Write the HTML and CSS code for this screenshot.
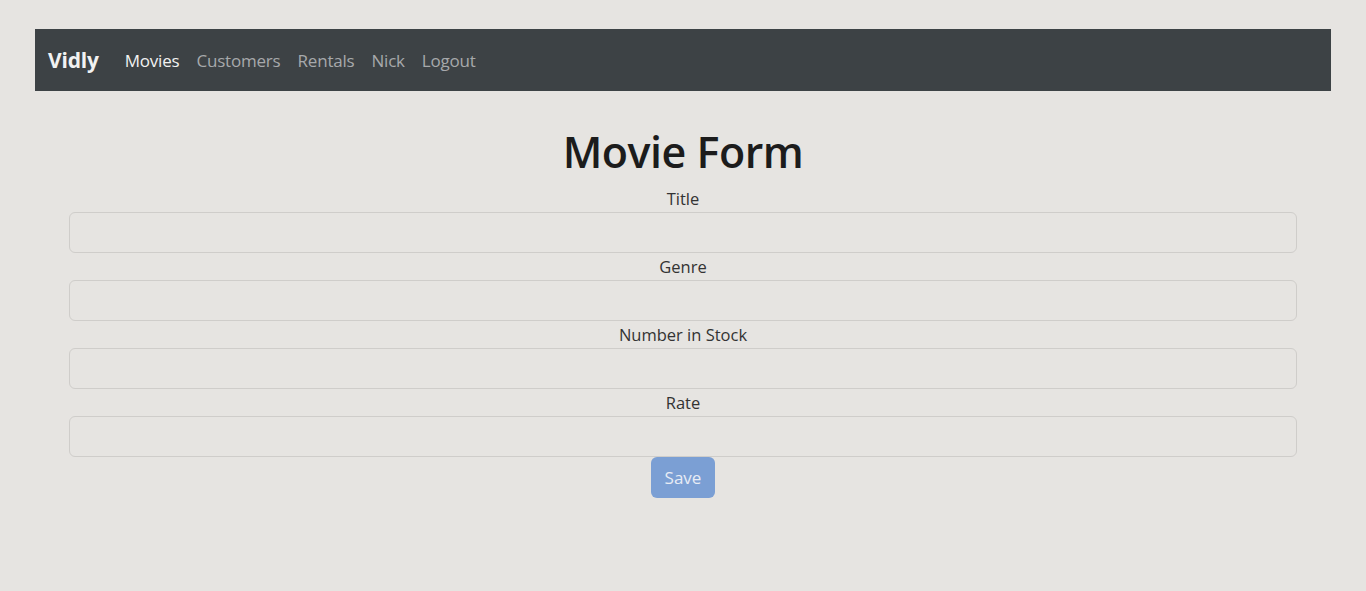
FILE: index.html
```html
<!DOCTYPE html>
<html lang="en">
<head>
<meta charset="utf-8">
<title>Vidly</title>
<link rel="stylesheet" href="styles.css">
</head>
<body>
<div class="page">
  <nav class="navbar">
    <a class="brand" href="#">Vidly</a>
    <ul class="nav-links">
      <li><a class="nav-link active" href="#">Movies</a></li>
      <li><a class="nav-link" href="#">Customers</a></li>
      <li><a class="nav-link" href="#">Rentals</a></li>
      <li><a class="nav-link" href="#">Nick</a></li>
      <li><a class="nav-link" href="#">Logout</a></li>
    </ul>
  </nav>
  <main class="content">
    <h1 class="title">Movie Form</h1>
    <form class="form">
      <div class="field">
        <label for="title">Title</label>
        <input id="title" type="text">
      </div>
      <div class="field">
        <label for="genre">Genre</label>
        <input id="genre" type="text">
      </div>
      <div class="field">
        <label for="stock">Number in Stock</label>
        <input id="stock" type="text">
      </div>
      <div class="field">
        <label for="rate">Rate</label>
        <input id="rate" type="text">
      </div>
      <button class="btn" type="button">Save</button>
    </form>
  </main>
</div>
</body>
</html>
```

FILE: styles.css
```css
* { box-sizing: border-box; }
html, body { margin: 0; padding: 0; }
body {
  background: #e6e4e1;
  font-family: "Open Sans", "Noto Sans", sans-serif;
  color: #212529;
}
.page {
  padding: 29px 35px 0;
}
.navbar {
  background: #3d4245;
  height: 62px;
  display: flex;
  align-items: center;
  padding: 0 13px;
}
.brand {
  color: #f2f2f2;
  font-size: 21px;
  font-weight: 700;
  text-decoration: none;
  margin-right: 26px;
  letter-spacing: -0.2px;
}
.nav-links {
  list-style: none;
  margin: 0;
  padding: 0;
  display: flex;
  gap: 17px;
}
.nav-link {
  color: #a7a9ab;
  text-decoration: none;
  font-size: 17px;
  letter-spacing: -0.2px;
}
.nav-link.active { color: #f2f2f2; }
.content {
  padding: 0 34px;
  text-align: center;
}
.title {
  margin: 34px 0 6px;
  font-size: 43px;
  font-weight: 600;
  line-height: 54px;
  color: #1c1c1c;
  letter-spacing: -0.5px;
}
.form {
  display: flex;
  flex-direction: column;
  align-items: center;
}
.field {
  width: 100%;
  display: flex;
  flex-direction: column;
  align-items: center;
}
.field label {
  font-size: 16.5px;
  line-height: 27px;
  color: #333;
  height: 27px;
}
.field input {
  width: 100%;
  height: 41px;
  border: 1px solid #cfcdca;
  border-radius: 6px;
  background: #e6e4e1;
  font: inherit;
}
.btn {
  width: 64px;
  height: 41px;
  border: none;
  border-radius: 6px;
  background: #7b9fd4;
  color: #e8ecf4;
  font: inherit;
  font-size: 17px;
}
```
